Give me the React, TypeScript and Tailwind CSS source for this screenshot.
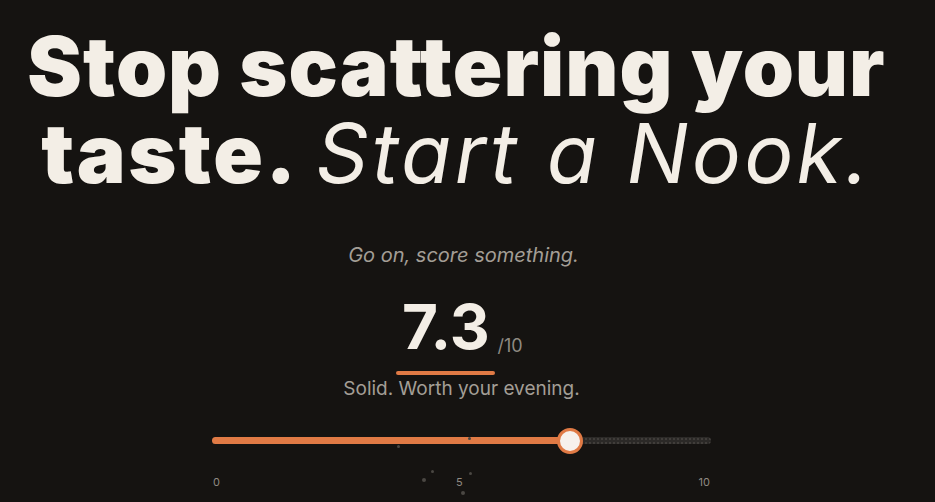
import type { CSSProperties } from 'react';

const SCORE = 7.3;

// Loose specks floating around the slider, purely decorative.
const SPECKS = [
  { left: 185, top: 17, size: 3 },
  { left: 256, top: 9, size: 3 },
  { left: 210, top: 50, size: 4 },
  { left: 219, top: 42, size: 3 },
  { left: 257, top: 44, size: 3 },
  { left: 249, top: 63, size: 4 },
];

export default function App() {
  const ratio = SCORE / 10;
  // thumb stays inside the track, so its centre travels 13px..(100% - 13px)
  const centre = `calc(13px + (100% - 26px) * ${ratio})`;
  const fill: CSSProperties = { width: centre };
  const thumb: CSSProperties = { left: centre };

  return (
    <div
      className="flex min-h-screen flex-col items-center overflow-hidden bg-[#151311] text-[#f3eee6]"
      style={{ fontFamily: 'Inter, "Noto Sans", sans-serif' }}
    >
      <h1 className="mr-[22px] mt-[23px] text-center text-[82px] leading-[87px] font-black tracking-[0.012em] whitespace-nowrap">
        Stop scattering your
        <br />
        <span className="tracking-[0.03em]">taste.</span>{' '}
        <em className="font-normal tracking-[0.04em]">Start a Nook.</em>
      </h1>

      <p className="mr-[8px] mt-[43px] text-[20px] italic text-[#a39e96]">Go on, score something.</p>

      <div className="mt-[26px] flex items-end pr-[16px]">
        <div className="flex flex-col items-center">
          <span className="text-[62px] leading-[62px] font-bold">7.3</span>
          <span className="mt-[13px] h-[4px] w-[99px] rounded-full bg-[#e07a45]" />
        </div>
        <span className="mb-[16px] ml-[2px] text-[18px] text-[#8f8a82]">/10</span>
      </div>

      <p className="mr-[12px] mt-[0px] text-[19px] text-[#a39e96]">Solid. Worth your evening.</p>

      <div className="relative mr-[12px] mt-[24px] w-[499px]">
        <div className="relative h-[26px]">
          <div className="absolute inset-x-0 top-[9px] h-[7px] rounded-full bg-[#2b2927] bg-[radial-gradient(#403d3a_1px,transparent_1px)] bg-[length:4px_4px]" />
          <div
            className="absolute left-0 top-[9px] h-[7px] rounded-full bg-[#e07a45]"
            style={fill}
          />
          <div
            className="absolute top-0 h-[26px] w-[26px] -translate-x-1/2 rounded-full border-[3px] border-[#e07a45] bg-[#f7f1ec]"
            style={thumb}
          />
        </div>
        <div className="mt-[20px] flex justify-between px-[1px] text-[11px] text-[#8f8a82]">
          <span>0</span>
          <span>5</span>
          <span>10</span>
        </div>
        {SPECKS.map((s, i) => (
          <span
            key={i}
            className="absolute rounded-full bg-[#4a4743]"
            style={{ left: s.left, top: s.top, width: s.size, height: s.size }}
          />
        ))}
      </div>
    </div>
  );
}
